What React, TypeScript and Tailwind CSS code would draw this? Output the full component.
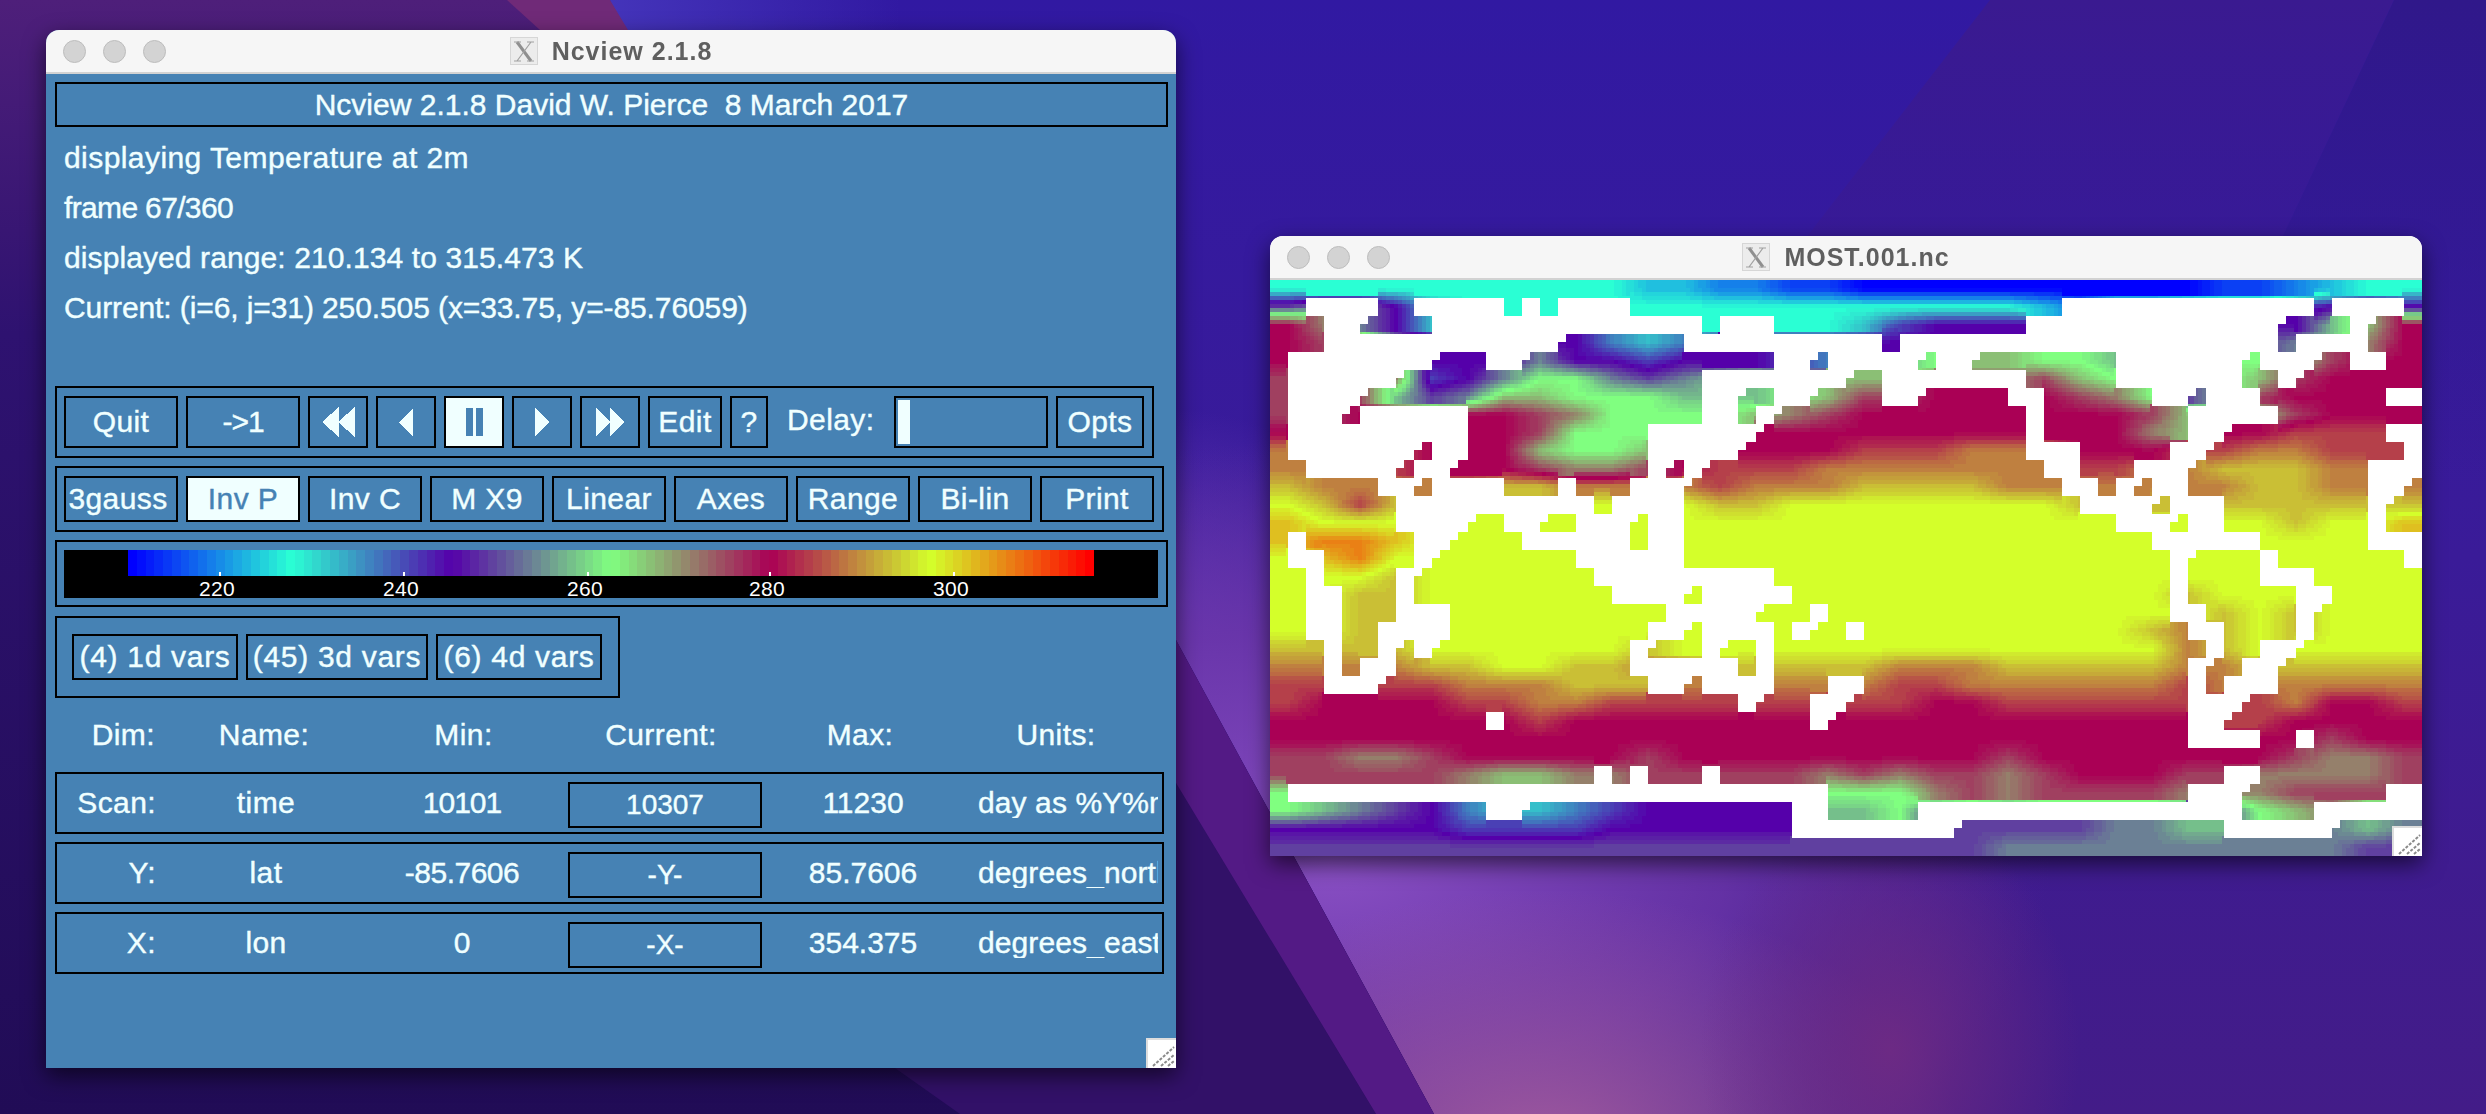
import React from "react";

const STOPS: [number, number, number][] = [
  [0, 0, 255],
  [42, 255, 212],
  [85, 0, 170],
  [128, 255, 128],
  [170, 0, 85],
  [212, 255, 42],
  [255, 0, 0],
];

function colorAt(t: number): string {
  const v = Math.max(0, Math.min(0.99999, t)) * 6;
  const i = Math.floor(v);
  const f = v - i;
  const a = STOPS[i];
  const b = STOPS[i + 1];
  const c = [0, 1, 2].map((n) => Math.round(a[n] + (b[n] - a[n]) * f));
  return `rgb(${c[0]},${c[1]},${c[2]})`;
}

const FIELD = [
  "eeeeeeeeeeddccbbaaaaaaaaaabbcdee",
  "jkkifeeeeeeeeeeeeeeeedcffggghiji",
  "qokifeeeeeeeeeeefhiiiiiiiiiiilnq",
  "qppkjjjiigfgiiiiiiiiiiiijjjjkloq",
  "qqmjiiikiihiiihgklmnnmmlmmmmnpqq",
  "pppohikmmkjklmmnnnooopnmmmmnpqqq",
  "pppljknnmmmlllmnppqqqqpomjlpqqqq",
  "ppqqqqqpommmmnopqqqqqqqqpnmnpqqq",
  "qqqqqqqpmmmopqqqqqqqqqqqonqqrrrr",
  "srrrqqqnmmnqqqqqrrrsssqqqrrssrrr",
  "ssrrqqqpoopqrrrsssssssrrsstttsss",
  "tsssssttssssrsssttttsssssssttsss",
  "utrtuuuuuuuuttuuuuuuuuttttttttttu".slice(0, 32),
  "vuuuuuuuuuuuuuuuuuuuuuuuuuuutuuv",
  "vwwvuuuuuuuuuuuuuuuuuuuuuuuuuuuv",
  "uvwuuuuuuuuuuuuuuuuuuuuuuuuuuuuu",
  "uuutuuuuuuuuuuuuuuuuuuuuuuuuuuuu",
  "uuttuuuuuuuuuuuuuuuuuuuuutuuuuuu",
  "uuttuuuuuuuuuuuuuuuuuuuuuututuuu",
  "uuttuuuuuuuuuuuuuuuuuuuutstutuuu",
  "ttttuuuuuutuuuuuuuuuuuuuustuuuuu",
  "ssssttuuttssttttt" + "ssstttttsstttttt".slice(0, 15),
  "rrrrrssstttssssssrrssssssrssssss",
  "rqqqqrrssrrrrrrrrrqqrrrrrrrrsqqr",
  "qqqqqqqrqqqqqqqqqqqqqqqqqqrrqqqq",
  "qqqqqqqqqqqqqqqqqqqqqqqqqqqqqpqq",
  "ppoopqqqqqpqqqqqqqqqpqqqqqqqpoop",
  "ppppponnoopppppopoppopqqqppoooop",
  "mnnnnnnnnnnnnnnmmmopoppppooopppp",
  "mlkjigffghiiiiillmjjjjjjjjjmnokk",
  "iiiiihhhhiiiiiijjjjjjjjkkllkkklk",
  "jjjjjjjjjjjjjjjjjjjjkkkkkkkkkkjj",
];

const MASK = [
  "",
  "2-5,8-12,14,16-19,44-57,59-62",
  "3-4,9-23,25-27,42-55,60",
  "3-15,23-33,35-55,57-60",
  "1-8,12-13,28-29,31-35,37-38,47-53,55-57,60-61",
  "1-6,24-31,34-41,47-53,56",
  "1-4,24-25,28-29,34-35,41-42,49-50,52-54,62-63",
  "1-3,5-10,24-25,27,42,51-55",
  "1-10,21-26,42,51-52,62-63",
  "1-7,9-10,21-25,42-44,50-51,63",
  "2-6,8-9,21,23,43-44,48-50,61-63",
  "6-7,9-12,16,20-22,44-45,47,49-50,61-62",
  "7-17,19-22,45-48,50-52,61",
  "7-10,13-14,17-19,21-22,47-49,51-52,61",
  "1,8-9,14-19,21-22,49-54,61-63",
  "1-2,8,17-22,50,55,63",
  "2,7,18-27,50,55-57",
  "2-3,7,19-22,24-28,50,57-58",
  "2-3,7-9,22-26,30,50-51,57",
  "2-3,6-9,21-22,24-27,29,32,51-52,57",
  "3,6,8,20,24,27,52,55-56",
  "3,5-6,20-25,27,51,54-55",
  "3-5,21-22,24-27,31-32,51,53-55",
  "26,30-31,51-53",
  "12,30,51-52",
  "51-54,57",
  "",
  "18,20,24,53-54",
  "1-30,51-53,62-63",
  "12-13,29-30,36-53,58-63",
  "29-37,53-58",
  "",
];

function buildMap() {
  const masked: boolean[][] = MASK.map((spec) => {
    const row = new Array(64).fill(false);
    spec.split(",").filter(Boolean).forEach((part) => {
      const [a, b] = part.split("-").map(Number);
      for (let c = a; c <= (b ?? a); c++) row[c] = true;
    });
    return row;
  });
  const level = (r: number, k: number) => {
    const rr = Math.max(0, Math.min(31, r));
    const kk = Math.max(0, Math.min(31, k));
    const s = FIELD[rr];
    return (s.charCodeAt(Math.min(kk, s.length - 1)) - 97) / 24;
  };
  const BLOCK = 4;
  const LEVELS = 144;
  const runs: string[][] = Array.from({ length: LEVELS + 1 }, () => []);
  for (let y = 0; y < 576; y += BLOCK) {
    const py = y + BLOCK / 2;
    const fr = (py - 9) / 18;
    const r0 = Math.floor(fr);
    const R = Math.floor(py / 18);
    const other = r0 === R ? r0 + 1 : r0;
    let start = 0;
    let cur = -1;
    for (let x = 0; x <= 1152; x += BLOCK) {
      let idx = -2;
      if (x < 1152) {
        const px = x + BLOCK / 2;
        const C = Math.floor(px / 18);
        const fk = (px - 18) / 36;
        const k0 = Math.floor(fk);
        const tk = fk - k0;
        const at = (r: number) => level(r, k0) * (1 - tk) + level(r, k0 + 1) * tk;
        let v: number;
        if (other >= 0 && other < 32 && masked[other][C]) v = at(R);
        else {
          const tr = fr - r0;
          v = at(r0) * (1 - tr) + at(r0 + 1) * tr;
        }
        idx = Math.round(v * LEVELS);
      }
      if (idx !== cur) {
        if (cur >= 0) runs[cur].push(`M${start} ${y}h${x - start}v${BLOCK}h${start - x}z`);
        start = x;
        cur = idx;
      }
    }
  }
  let white = "";
  masked.forEach((row, r) => {
    row.forEach((on, c) => {
      const x = c * 18;
      const y = r * 18;
      if (on) white += `M${x} ${y}h18v18h-18z`;
      else if (c > 0 && r > 0 && row[c - 1] && masked[r - 1][c]) white += `M${x} ${y}h8v8h-8z`;
    });
  });
  return {
    white,
    paths: runs
      .map((parts, i) => ({ fill: colorAt(i / LEVELS), d: parts.join("") }))
      .filter((p) => p.d),
  };
}

const MAP = buildMap();

function Wallpaper() {
  return (
    <svg className="absolute inset-0" width="2486" height="1114" viewBox="0 0 2486 1114">
      <defs>
        <linearGradient id="base" x1="0" y1="0" x2="0" y2="1">
          <stop offset="0" stopColor="#3119a2" />
          <stop offset="0.5" stopColor="#3a1b98" />
          <stop offset="1" stopColor="#431c88" />
        </linearGradient>
        <linearGradient id="left" x1="0" y1="0" x2="0" y2="1">
          <stop offset="0" stopColor="#4e1f7a" />
          <stop offset="0.3" stopColor="#2e1270" />
          <stop offset="1" stopColor="#210c56" />
        </linearGradient>
        <linearGradient id="band" x1="0" y1="0" x2="0" y2="1">
          <stop offset="0" stopColor="#3a1a90" />
          <stop offset="1" stopColor="#3a1a90" stopOpacity="0" />
        </linearGradient>
        <linearGradient id="bandDark" x1="0" y1="0" x2="0" y2="1">
          <stop offset="0" stopColor="#30188a" />
          <stop offset="1" stopColor="#30188a" stopOpacity="0" />
        </linearGradient>
        <linearGradient id="topGlow" x1="0" y1="0" x2="1" y2="0">
          <stop offset="0" stopColor="#4434ba" />
          <stop offset="1" stopColor="#4434ba" stopOpacity="0" />
        </linearGradient>
        <radialGradient id="violet">
          <stop offset="0" stopColor="#6d3fc0" />
          <stop offset="1" stopColor="#6d3fc0" stopOpacity="0" />
        </radialGradient>
        <radialGradient id="light">
          <stop offset="0" stopColor="#8a50c4" />
          <stop offset="0.55" stopColor="#6a35a8" stopOpacity="0.85" />
          <stop offset="1" stopColor="#5a2a9a" stopOpacity="0" />
        </radialGradient>
        <radialGradient id="pink">
          <stop offset="0" stopColor="#a05a9e" />
          <stop offset="1" stopColor="#a05a9e" stopOpacity="0" />
        </radialGradient>
        <radialGradient id="plum">
          <stop offset="0" stopColor="#6c2a84" />
          <stop offset="1" stopColor="#6c2a84" stopOpacity="0" />
        </radialGradient>
        <clipPath id="lightClip">
          <polygon points="610,0 2486,0 2486,1114 1434,1114 1176,640 700,300" />
        </clipPath>
      </defs>
      <rect width="2486" height="1114" fill="url(#base)" />
      <polygon points="610,0 900,0 900,240 640,240" fill="url(#topGlow)" />
      <polygon points="1990,0 2394,0 2168,480 1665,420" fill="url(#band)" />
      <polygon points="2394,0 2486,0 2486,480 2168,480" fill="url(#bandDark)" />
      <g clipPath="url(#lightClip)">
        <ellipse cx="1180" cy="670" rx="240" ry="260" fill="url(#violet)" />
        <ellipse cx="1330" cy="860" rx="720" ry="420" fill="url(#light)" />
        <ellipse cx="1540" cy="1150" rx="420" ry="260" fill="url(#pink)" />
        <ellipse cx="1890" cy="1050" rx="190" ry="240" fill="url(#plum)" />
      </g>
      <polygon points="0,0 610,0 640,240 700,300 1176,640 1434,1114 0,1114" fill="url(#left)" />
      <polygon points="507,0 610,0 628,30 540,30" fill="#702a78" />
      <polygon points="895,1068 960,1114 1376,1114 1176,783 1100,780" fill="#321168" />
      <polygon points="1176,640 1434,1114 1376,1114 1176,783" fill="#531a85" />
    </svg>
  );
}

function TitleBar({ title }: { title: string }) {
  return (
    <div className="grid h-[44px] shrink-0 grid-cols-[1fr_auto_1fr] items-center rounded-t-[13px] border-b-2 border-[#d2d2d2] bg-[#f6f6f6]">
      <div className="flex gap-[17px] pl-[17px]">
        <span className="h-[23px] w-[23px] rounded-full border border-[#bdbdbd] bg-[#d3d3d3]" />
        <span className="h-[23px] w-[23px] rounded-full border border-[#bdbdbd] bg-[#d3d3d3]" />
        <span className="h-[23px] w-[23px] rounded-full border border-[#bdbdbd] bg-[#d3d3d3]" />
      </div>
      <div className="flex items-center gap-[14px]">
        <svg width="28" height="28" viewBox="0 0 28 28">
          <rect x="0.5" y="0.5" width="27" height="27" fill="#ececec" stroke="#d6d6d6" />
          <path d="M7 5L21 24" stroke="#8f8f8f" strokeWidth="3" />
          <path d="M21 5L7 24M4 5H11M17 5H24M4 24H11M17 24H24" stroke="#a0a0a0" strokeWidth="1.2" />
        </svg>
        <span className="text-[25px] font-bold leading-none tracking-[1px] text-[#5f5f5f] blur-[0.4px]">{title}</span>
      </div>
      <div />
    </div>
  );
}

function Grip() {
  return (
    <svg className="absolute bottom-0 right-0" width="30" height="30" viewBox="0 0 30 30">
      <rect width="30" height="30" fill="#ffffff" />
      <path d="M1 30V1H30" fill="none" stroke="#dddddd" strokeWidth="2" />
      <path d="M7 28L28 9M15 28L28 17M22 28L28 23" stroke="#8a8a8a" strokeWidth="2" strokeDasharray="3 1.5" />
    </svg>
  );
}

function Btn({ className, active, children }: { className: string; active?: boolean; children: React.ReactNode }) {
  return (
    <div
      className={`flex shrink-0 items-center justify-center whitespace-nowrap border-2 border-black ${
        active ? "bg-[#f0ffff] text-[#4682b4]" : ""
      } ${className}`}
    >
      {children}
    </div>
  );
}

function Arrow({ width, points, fill = "#f0ffff" }: { width: number; points: string[]; fill?: string }) {
  return (
    <svg width={width} height="30" viewBox={`0 0 ${width} 30`} shapeRendering="crispEdges">
      {points.map((p) => (
        <polygon key={p} points={p} fill={fill} />
      ))}
    </svg>
  );
}

function ColorBar() {
  const count = 110;
  const steps = Array.from({ length: count }, (_, i) => i);
  const edge = (i: number) => 64 + Math.round((i * 966) / count);
  const ticks = [
    { x: 155, cx: 153, label: "220" },
    { x: 339, cx: 337, label: "240" },
    { x: 523, cx: 521, label: "260" },
    { x: 705, cx: 703, label: "280" },
    { x: 889, cx: 887, label: "300" },
  ];
  return (
    <svg width="1094" height="48" viewBox="0 0 1094 48">
      <rect width="1094" height="48" fill="#000000" />
      <g shapeRendering="crispEdges">
        {steps.map((i) => (
          <rect key={i} x={edge(i)} y="0" width={edge(i + 1) - edge(i)} height="26" fill={colorAt(i / (count - 1))} />
        ))}
      </g>
      {ticks.map((t) => (
        <g key={t.label}>
          <rect x={t.x} y="22" width="2" height="4" fill="#ffffff" shapeRendering="crispEdges" />
          <text x={t.cx} y="45.5" textAnchor="middle" fontSize="21" fill="#ffffff" fontFamily="'Liberation Sans', sans-serif">
            {t.label}
          </text>
        </g>
      ))}
    </svg>
  );
}

function DimRow({
  label,
  name,
  min,
  cur,
  max,
  units,
  minClass = "tracking-normal",
}: {
  label: string;
  name: string;
  min: string;
  cur: string;
  max: string;
  units: string;
  minClass?: string;
}) {
  return (
    <div className="flex h-[62px] w-[1109px] items-center border-2 border-black">
      <div className="w-[99px] text-right">{label}</div>
      <div className="ml-[20px] w-[180px] text-center">{name}</div>
      <div className={`ml-[10px] w-[192px] text-center ${minClass}`}>{min}</div>
      <Btn className="ml-[10px] mt-1 h-[46px] w-[194px] text-[28px] tracking-normal">{cur}</Btn>
      <div className="ml-[10px] w-[182px] text-center tracking-normal">{max}</div>
      <div className="ml-[24px] w-[180px] overflow-hidden whitespace-nowrap tracking-[0.1px]">{units}</div>
    </div>
  );
}

function ControlWindow() {
  return (
    <div className="absolute left-[46px] top-[30px] flex h-[1038px] w-[1130px] flex-col rounded-t-[13px] bg-[#4682b4] shadow-[0_8px_22px_rgba(0,0,0,0.6)]">
      <TitleBar title="Ncview 2.1.8" />
      <div className="flex flex-col items-start pl-[9px] pt-[8px] text-[30px] leading-none tracking-[0.4px] text-[#f0ffff] [-webkit-text-stroke:0.4px]">
        <div className="flex h-[45px] w-[1113px] items-center justify-center whitespace-pre border-2 border-black tracking-normal">
          Ncview 2.1.8 David W. Pierce  8 March 2017
        </div>
        <div className="mt-[6px] flex flex-col pl-[9px]">
          <div className="flex h-[50px] items-center tracking-[0.43px]">displaying Temperature at 2m</div>
          <div className="flex h-[50px] items-center tracking-[-0.65px]">frame 67/360</div>
          <div className="flex h-[50px] items-center tracking-[0.1px]">displayed range: 210.134 to 315.473 K</div>
          <div className="flex h-[50px] items-center tracking-[-0.1px]">Current: (i=6, j=31) 250.505 (x=33.75, y=-85.76059)</div>
        </div>
        <div className="mt-[53px] flex h-[72px] w-[1099px] items-start gap-2 border-2 border-black pl-[7px] pt-[8px]">
          <Btn className="h-[52px] w-[114px]">Quit</Btn>
          <Btn className="h-[52px] w-[114px] tracking-[-1px]">-&gt;1</Btn>
          <Btn className="h-[52px] w-[60px]">
            <Arrow width={33} points={["0,15 17,0 17,30", "16,15 33,0 33,30"]} />
          </Btn>
          <Btn className="h-[52px] w-[60px]">
            <Arrow width={14} points={["0,15 14,1 14,30"]} />
          </Btn>
          <Btn active className="h-[52px] w-[60px]">
            <Arrow width={17} fill="#4682b4" points={["0,1 7,1 7,29 0,29", "10,1 17,1 17,29 10,29"]} />
          </Btn>
          <Btn className="h-[52px] w-[60px]">
            <Arrow width={14} points={["0,1 14,15 0,30"]} />
          </Btn>
          <Btn className="h-[52px] w-[60px]">
            <Arrow width={28} points={["0,1 14,15 0,29", "14,1 28,15 14,29"]} />
          </Btn>
          <Btn className="h-[52px] w-[74px]">Edit</Btn>
          <Btn className="h-[52px] w-[38px]">?</Btn>
          <div className="flex h-[48px] w-[110px] shrink-0 items-center pl-[11px]">Delay:</div>
          <div className="flex h-[52px] w-[154px] shrink-0 border-2 border-black p-[2px]">
            <div className="h-[44px] w-[12px] bg-[#f0ffff]" />
          </div>
          <Btn className="h-[52px] w-[88px]">Opts</Btn>
        </div>
        <div className="mt-[8px] flex h-[66px] w-[1109px] items-start gap-2 border-2 border-black pl-[7px] pt-[8px]">
          <Btn className="h-[46px] w-[114px] pr-[6px]">3gauss</Btn>
          <Btn active className="h-[46px] w-[114px]">Inv P</Btn>
          <Btn className="h-[46px] w-[114px]">Inv C</Btn>
          <Btn className="h-[46px] w-[114px]">M X9</Btn>
          <Btn className="h-[46px] w-[114px]">Linear</Btn>
          <Btn className="h-[46px] w-[114px]">Axes</Btn>
          <Btn className="h-[46px] w-[114px]">Range</Btn>
          <Btn className="h-[46px] w-[114px]">Bi-lin</Btn>
          <Btn className="h-[46px] w-[114px]">Print</Btn>
        </div>
        <div className="mt-[8px] flex h-[67px] w-[1113px] border-2 border-black pl-[7px] pt-[8px]">
          <ColorBar />
        </div>
        <div className="mt-[9px] flex h-[82px] w-[565px] gap-2 border-2 border-black pl-[15px] pt-[16px]">
          <Btn className="h-[46px] w-[166px] tracking-[0.7px]">(4) 1d vars</Btn>
          <Btn className="h-[46px] w-[182px] tracking-[0.7px]">(45) 3d vars</Btn>
          <Btn className="h-[46px] w-[166px] tracking-[0.7px]">(6) 4d vars</Btn>
        </div>
        <div className="flex h-[74px] items-center pl-[2px]">
          <div className="w-[98px] text-right">Dim:</div>
          <div className="ml-[20px] w-[178px] text-center">Name:</div>
          <div className="ml-[20px] w-[181px] text-center">Min:</div>
          <div className="ml-[20px] w-[174px] text-center">Current:</div>
          <div className="ml-[20px] w-[184px] text-center">Max:</div>
          <div className="ml-[20px] w-[168px] text-center">Units:</div>
        </div>
        <div className="flex flex-col gap-2">
          <DimRow label="Scan:" name="time" min="10101" minClass="tracking-[-1px]" cur="10307" max="11230" units="day as %Y%m%d.f" />
          <DimRow label="Y:" name="lat" min="-85.7606" minClass="tracking-[-0.5px]" cur="-Y-" max="85.7606" units="degrees_north" />
          <DimRow label="X:" name="lon" min="0" cur="-X-" max="354.375" units="degrees_east" />
        </div>
      </div>
      <Grip />
    </div>
  );
}

function MapWindow() {
  return (
    <div className="absolute left-[1270px] top-[236px] flex h-[620px] w-[1152px] flex-col rounded-t-[13px] bg-white shadow-[0_8px_22px_rgba(0,0,0,0.6)]">
      <TitleBar title="MOST.001.nc" />
      <svg className="block" width="1152" height="576" viewBox="0 0 1152 576" shapeRendering="crispEdges">
        {MAP.paths.map((p) => (
          <path key={p.fill} d={p.d} fill={p.fill} />
        ))}
        <path d={MAP.white} fill="#ffffff" />
      </svg>
      <Grip />
    </div>
  );
}

export default function App() {
  return (
    <div className="relative h-[1114px] w-[2486px] overflow-hidden font-['Liberation_Sans',sans-serif]">
      <Wallpaper />
      <ControlWindow />
      <MapWindow />
    </div>
  );
}
